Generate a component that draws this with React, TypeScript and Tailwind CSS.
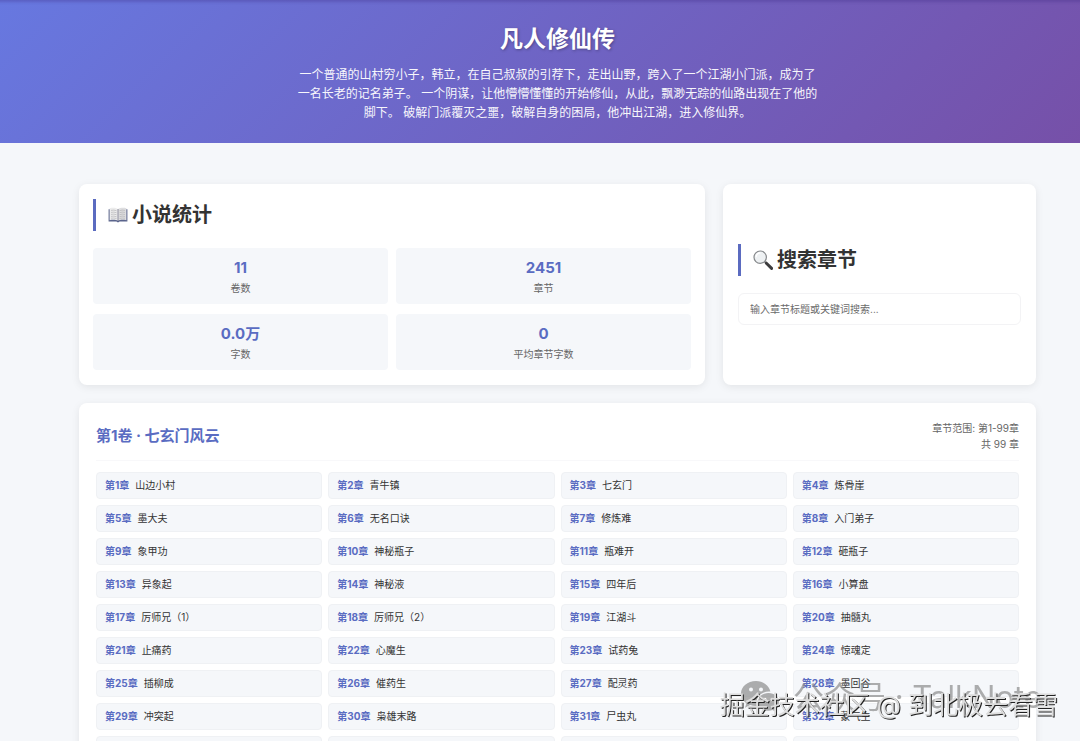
import React from 'react';

interface Stat {
  value: string;
  label: string;
}

const stats: Stat[] = [
  { value: '11', label: '卷数' },
  { value: '2451', label: '章节' },
  { value: '0.0万', label: '字数' },
  { value: '0', label: '平均章节字数' }
];

const chapters: string[] = [
  '山边小村', '青牛镇', '七玄门', '炼骨崖',
  '墨大夫', '无名口诀', '修炼难', '入门弟子',
  '象甲功', '神秘瓶子', '瓶难开', '砸瓶子',
  '异象起', '神秘液', '四年后', '小算盘',
  '厉师兄（1）', '厉师兄（2）', '江湖斗', '抽髓丸',
  '止痛药', '心魔生', '试药兔', '惊魂定',
  '插柳成', '催药生', '配灵药', '墨回谷',
  '冲突起', '枭雄末路', '尸虫丸', '蒙气生',
  '', '', '', ''
];

function BookIcon() {
  return (
    <svg viewBox="0 0 20 20" className="w-5 h-5 shrink-0" aria-hidden="true">
      <path d="M0.6 4.2H19.4V16.6H11.6L10 17.4L8.4 16.6H0.6Z" fill="#5a648c" />
      <path d="M1.6 3.2C4.5 2.5 8 2.6 10 4V15.8C8 14.6 4.5 14.6 1.6 15.2Z" fill="#ececec" />
      <path d="M18.4 3.2C15.5 2.5 12 2.6 10 4V15.8C12 14.6 15.5 14.6 18.4 15.2Z" fill="#dedee0" />
      <path
        d="M3 5.4Q6 4.6 8.6 5.8M3 7.4Q6 6.6 8.6 7.8M3 9.4Q6 8.6 8.6 9.8M3 11.4Q6 10.6 8.6 11.8M3 13.2Q6 12.6 8.6 13.6M17 5.4Q14 4.6 11.4 5.8M17 7.4Q14 6.6 11.4 7.8M17 9.4Q14 8.6 11.4 9.8M17 11.4Q14 10.6 11.4 11.8M17 13.2Q14 12.6 11.4 13.6"
        fill="none"
        stroke="#b4b4b8"
        strokeWidth="0.7"
      />
      <path d="M10 4V16" stroke="#77778a" strokeWidth="0.8" />
    </svg>
  );
}

function SearchIcon() {
  return (
    <svg viewBox="0 0 20 20" className="w-5 h-5 shrink-0" aria-hidden="true">
      <path d="M11.4 11.4L13.6 13.6" stroke="#8c8c8c" strokeWidth="2" />
      <path d="M13.4 13.2L18.6 18.4" stroke="#3c3c3e" strokeWidth="3" strokeLinecap="round" />
      <circle cx="7.2" cy="7.2" r="6.2" fill="#eef1f3" stroke="#85888b" strokeWidth="1.2" />
      <path d="M3.2 6.6A4.3 4.3 0 0 1 7 2.9" fill="none" stroke="#fff" strokeWidth="1.2" strokeLinecap="round" />
    </svg>
  );
}

function WechatIcon() {
  return (
    <svg viewBox="0 0 38 32" className="w-[38px] h-8 shrink-0" aria-hidden="true">
      <path
        fillRule="evenodd"
        fill="currentColor"
        d="M15 0C6.5 0 0 5.6 0 12.6c0 4 2.1 7.4 5.4 9.8L4 26.8l5.2-2.7c1.9.6 3.8.9 5.8.9h1C13.8 17 19.5 10.4 28 10.4h1.4C27.9 4.3 22 0 15 0ZM10 6.6a2 2 0 1 1 0 4 2 2 0 0 1 0-4Zm10 0a2 2 0 1 1 0 4 2 2 0 0 1 0-4Z"
      />
      <path
        fillRule="evenodd"
        fill="currentColor"
        d="M27.5 12C21.6 12 17 16 17 20.9s4.6 8.9 10.5 8.9c1.4 0 2.8-.3 4-.7l4 2.2-1.1-3.7c2.3-1.7 3.6-4.1 3.6-6.7C38 16 33.4 12 27.5 12Zm-3.5 4.8a1.5 1.5 0 1 1 0 3 1.5 1.5 0 0 1 0-3Zm7 0a1.5 1.5 0 1 1 0 3 1.5 1.5 0 0 1 0-3Z"
      />
    </svg>
  );
}

function SectionTitle({ icon, children }: { icon: React.ReactNode; children: React.ReactNode }) {
  return (
    <h2 className="flex items-center gap-1 h-8 pl-3 mb-[17px] border-l-[3px] border-[#5b6bc0] text-xl font-bold text-[#333]">
      {icon}
      {children}
    </h2>
  );
}

function Header() {
  return (
    <header className="pl-[35px] py-[21px] text-center text-white bg-[linear-gradient(135deg,#6778e0_0%,#7650a8_100%)] shadow-[inset_0_5px_3px_-3px_rgba(60,40,130,0.3)]">
      <h1 className="text-[23px] leading-9 font-bold mb-2 [text-shadow:1px_1px_3px_rgba(0,0,0,0.3)]">凡人修仙传</h1>
      <p className="max-w-[522px] mx-auto text-xs leading-[19px] opacity-95">
        一个普通的山村穷小子，韩立，在自己叔叔的引荐下，走出山野，跨入了一个江湖小门派，成为了一名长老的记名弟子。 一个阴谋，让他懵懵懂懂的开始修仙，从此，飘渺无踪的仙路出现在了他的脚下。 破解门派覆灭之噩，破解自身的困局，他冲出江湖，进入修仙界。
      </p>
    </header>
  );
}

function StatsCard() {
  return (
    <section className="bg-white rounded-lg px-3.5 py-[15px] shadow-[0_2px_8px_rgba(0,0,0,0.08)]">
      <SectionTitle icon={<BookIcon />}>小说统计</SectionTitle>
      <div className="grid grid-cols-2 gap-x-2 gap-y-2.5">
        {stats.map((stat) => (
          <div key={stat.label} className="h-14 pt-2.5 rounded-sm bg-[#f5f7fa] text-center">
            <div className="text-[15px] leading-5 font-bold text-[#5a6cc2]">{stat.value}</div>
            <div className="text-[10px] leading-5 text-[#666]">{stat.label}</div>
          </div>
        ))}
      </div>
    </section>
  );
}

function SearchCard() {
  return (
    <section className="flex flex-col justify-center bg-white rounded-lg px-[15px] py-[15px] shadow-[0_2px_8px_rgba(0,0,0,0.08)]">
      <SectionTitle icon={<SearchIcon />}>搜索章节</SectionTitle>
      <input
        type="text"
        aria-label="搜索章节"
        placeholder="输入章节标题或关键词搜索..."
        className="w-full h-8 px-[11px] rounded-md border border-[#f3f3f5] bg-white text-[10px] text-[#333] placeholder:text-[#6b6b6b] outline-none"
      />
    </section>
  );
}

function VolumeCard() {
  return (
    <section className="bg-white rounded-lg px-[17px] pt-[17px] pb-4 shadow-[0_2px_8px_rgba(0,0,0,0.08)]">
      <div className="flex justify-between items-center pb-2 mb-[11px] border-b border-[#f8f8fa]">
        <h2 className="text-[15px] font-bold text-[#5a6cc2]">第1卷 · 七玄门风云</h2>
        <div className="text-[10px] leading-4 text-right text-[#666]">
          <div>章节范围: 第1-99章</div>
          <div>共 99 章</div>
        </div>
      </div>
      <ul className="grid grid-cols-4 gap-1.5">
        {chapters.map((title, i) => (
          <li key={i}>
            <a
              href="#"
              className="flex items-center gap-1.5 h-[27px] px-2 rounded-sm border border-[#eff1f4] bg-[#f5f7fa] text-[10px] text-[#333]"
            >
              {title && <span className="font-bold text-[#5a6cc2]">第{i + 1}章</span>}
              <span>{title}</span>
            </a>
          </li>
        ))}
      </ul>
    </section>
  );
}

function Watermarks() {
  return (
    <div className="fixed bottom-0 right-0 w-[360px] h-[70px] pointer-events-none whitespace-nowrap">
      <div className="absolute left-[21px] top-1.5 flex items-center gap-3.5 text-[31px] leading-10 text-[#8c8c8c]/70">
        <WechatIcon />
        <span>公众号 · TalkNote</span>
      </div>
      <div className="absolute right-[22px] top-4 text-[25px] leading-9 text-[#ddd] [text-shadow:1px_1px_0_#222]">
        掘金技术社区 @ 到北极去看雪
      </div>
    </div>
  );
}

export default function App() {
  return (
    <div className="h-screen overflow-hidden bg-[#f5f7fa] font-[Inter,'Noto_Sans_CJK_SC',sans-serif]">
      <Header />
      <main className="pl-[79px] pr-11 pt-[41px]">
        <div className="grid grid-cols-[2fr_1fr] gap-[18px] mb-[18px]">
          <StatsCard />
          <SearchCard />
        </div>
        <VolumeCard />
      </main>
      <Watermarks />
    </div>
  );
}
